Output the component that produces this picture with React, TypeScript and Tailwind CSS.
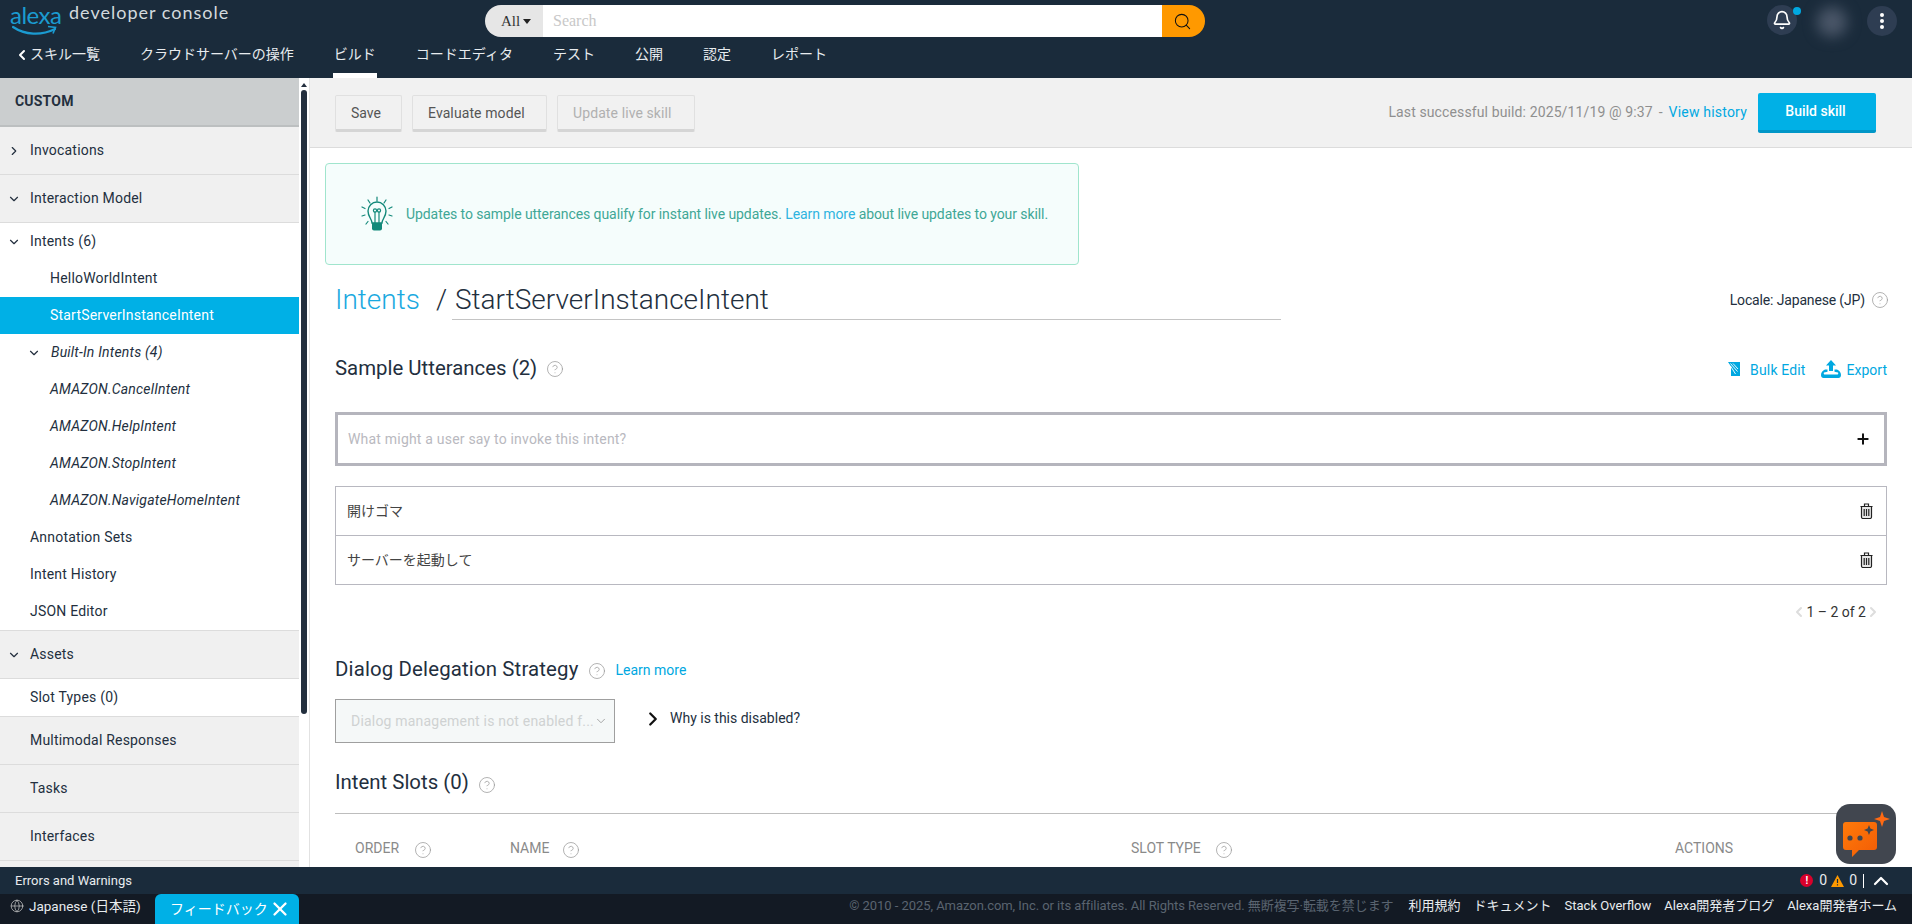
import React from "react";
import { ChevronRight, ChevronDown, ChevronLeft, ChevronUp, CircleHelp, Plus, Search, Bell, Globe, X } from "lucide-react";

const font = "font-[family-name:Roboto,'Noto_Sans_CJK_JP',sans-serif]";

function Help({ className = "" }: { className?: string }) {
  return (
    <span className={`w-[15px] h-[15px] flex items-center justify-center shrink-0 ${className}`}>
      <CircleHelp size={18} strokeWidth={1} className="text-[#9a9a9a] shrink-0" />
    </span>
  );
}

function Trash() {
  return (
    <svg width="13" height="16" viewBox="0 0 13 16" fill="none" stroke="#222" strokeWidth="1.2">
      <path d="M0.5 3.500h12M4.500 3V1h4v2" />
      <path d="M1.500 3.500h10V14a1.500 1.500 0 0 1-1.500 1.500H3A1.500 1.500 0 0 1 1.500 14z" fill="#e8e8e8" />
      <path d="M4.200 6v7M6.500 6v7M8.800 6v7" />
    </svg>
  );
}

function NavItem({ label, active }: { label: string; active?: boolean }) {
  return (
    <div className="relative h-full flex items-center">
      <span className="text-[14px] text-[#e8ecef] leading-none pb-[14px]">{label}</span>
      {active && <div className="absolute -left-[1px] -right-[1px] bottom-0 h-[5px] bg-white" />}
    </div>
  );
}

function GrayRow({ label, icon, pl = "pl-[30px]" }: { label: string; icon?: "right" | "down"; pl?: string }) {
  return (
    <div className={`h-[48px] bg-[#f0f0f0] border-b border-[#dcdcdc] flex items-center text-[14px] text-[#232f3e] ${pl} relative shrink-0`}>
      {icon === "right" && <ChevronRight size={14} strokeWidth={2} className="absolute left-[7px] text-[#232f3e]" />}
      {icon === "down" && <ChevronDown size={14} strokeWidth={2} className="absolute left-[7px] text-[#232f3e]" />}
      {label}
    </div>
  );
}

function TreeRow({ label, italic, pl, selected }: { label: string; italic?: boolean; pl: string; selected?: boolean }) {
  return (
    <div
      className={`h-[37px] flex items-center text-[14px] shrink-0 ${pl} ${italic ? "italic" : ""} ${
        selected ? "bg-[#00b0e6] text-white" : "bg-white text-[#232f3e]"
      }`}
    >
      {label}
    </div>
  );
}

function Sidebar() {
  return (
    <div className="w-[310px] shrink-0 flex border-r border-[#e2e2e2] h-full overflow-hidden tracking-[0.2px]">
      <div className="w-[299px] flex flex-col shrink-0">
        <div className="h-[49px] bg-[#cbcecf] border-b-[2px] border-[#bcbfc0] flex items-center pl-[15px] text-[14px] font-bold text-[#232f3e] shrink-0">
          CUSTOM
        </div>
        <GrayRow label="Invocations" icon="right" />
        <GrayRow label="Interaction Model" icon="down" />
        <div className="relative h-[37px] bg-white flex items-center pl-[30px] text-[14px] text-[#232f3e] shrink-0">
          <ChevronDown size={14} strokeWidth={2} className="absolute left-[7px]" />
          Intents (6)
        </div>
        <TreeRow label="HelloWorldIntent" pl="pl-[50px]" />
        <TreeRow label="StartServerInstanceIntent" pl="pl-[50px]" selected />
        <div className="relative h-[37px] bg-white flex items-center pl-[51px] text-[14px] italic text-[#232f3e] shrink-0">
          <ChevronDown size={14} strokeWidth={2} className="absolute left-[27px]" />
          Built-In Intents (4)
        </div>
        <TreeRow label="AMAZON.CancelIntent" pl="pl-[50px]" italic />
        <TreeRow label="AMAZON.HelpIntent" pl="pl-[50px]" italic />
        <TreeRow label="AMAZON.StopIntent" pl="pl-[50px]" italic />
        <TreeRow label="AMAZON.NavigateHomeIntent" pl="pl-[50px]" italic />
        <TreeRow label="Annotation Sets" pl="pl-[30px]" />
        <TreeRow label="Intent History" pl="pl-[30px]" />
        <TreeRow label="JSON Editor" pl="pl-[30px]" />
        <div className="h-[1px] bg-[#dcdcdc] shrink-0" />
        <GrayRow label="Assets" icon="down" />
        <div className="h-[38px] bg-white border-b border-[#dcdcdc] flex items-center pl-[30px] text-[14px] text-[#232f3e] shrink-0">
          Slot Types (0)
        </div>
        <GrayRow label="Multimodal Responses" />
        <GrayRow label="Tasks" />
        <GrayRow label="Interfaces" />
        <div className="flex-1 bg-[#f0f0f0]" />
      </div>
      <div className="w-[10px] bg-white flex flex-col items-center pt-[5px] shrink-0">
        <div className="w-0 h-0 border-x-[3px] border-x-transparent border-b-[4px] border-b-[#232f3e] mb-[3px]" />
        <div className="w-[6px] h-[624px] rounded-[3px] bg-[#232f3e]" />
      </div>
    </div>
  );
}

function Toolbar() {
  const btn = "h-[37px] px-[15px] pt-[2px] mt-[2px] flex items-center rounded-[2px] border border-[#e0e0e0] border-b-[3px] border-b-[#d5d5d5] text-[14px]";
  return (
    <div className="h-[70px] bg-[#f1f1f1] border-b border-[#dcdcdc] flex items-center pl-[25px] pr-[36px] shrink-0">
      <div className={`${btn} w-[67px] text-[#555]`}>Save</div>
      <div className={`${btn} w-[135px] text-[#555] ml-[10px] tracking-[0.1px]`}>Evaluate model</div>
      <div className={`${btn} w-[138px] text-[#b0b0b0] ml-[10px] tracking-[0.1px]`}>Update live skill</div>
      <div className="flex-1" />
      <span className="text-[14px] text-[#8f8f8f] tracking-[0.12px]">Last successful build: 2025/11/19 @ 9:37</span>
      <span className="text-[14px] text-[#8f8f8f] ml-[6px]">-</span>
      <span className="text-[14px] text-[#00a8e1] ml-[6px] tracking-[0.2px]">View history</span>
      <div className="ml-[11px] w-[118px] h-[40px] bg-[#00b0e6] border-b-[3px] border-[#0096c7] rounded-[2px] flex items-center justify-center text-white text-[14px] font-medium pr-[3px]">
        Build skill
      </div>
    </div>
  );
}

function Bulb() {
  return (
    <svg width="32" height="36" viewBox="0 0 32 36" fill="none" stroke="#13897a" strokeWidth="1.2" strokeLinecap="round">
      <path d="M16 1v4M7 4l2 3M25 4l-2 3M1 11l3 1.500M31 11l-3 1.500M1 20l3-1M31 20l-3-1M5 28l2-2.500M27 28l-2-2.500" />
      <path d="M11 27c0-4-4-6-4-12a9 9 0 0 1 18 0c0 6-4 8-4 12z" strokeWidth="1.4" />
      <path d="M14 27v-11M18 27v-11" />
      <circle cx="14" cy="14.500" r="1.600" />
      <circle cx="18" cy="14.500" r="1.600" />
      <path d="M11 27h10v5.500a2 2 0 0 1-2 2h-6a2 2 0 0 1-2-2z" fill="#13897a" stroke="none" />
    </svg>
  );
}

function BulkIcon() {
  return (
    <svg width="12" height="14" viewBox="0 0 12 14" fill="#00a8e1">
      <path d="M0 0h12v14H3V4.500z" />
      <path d="M2.500 1.500l7 8M5 1.500l5 5.500M2.500 4l5 8" stroke="#fff" strokeWidth="0.9" fill="none" />
    </svg>
  );
}

function ExportIcon() {
  return (
    <svg width="20" height="18" viewBox="0 0 20 18" fill="#00a8e1">
      <path d="M10 0l5 5.500h-3V11H8V5.500H5z" />
      <path d="M4 9.500h2.500v2.200L3 12.500c-.5.2-.3 2 .4 2h13.200c.7 0 .9-1.800.4-2l-3.500-.8V9.500H16c2.500 1 4 3.200 4 5.500 0 1.700-1 3-2.600 3H2.600C1 18 0 16.700 0 15c0-2.300 1.500-4.500 4-5.500z" />
    </svg>
  );
}

function MainContent() {
  return (
    <div className="flex-1 min-w-0 h-full bg-white overflow-hidden flex flex-col">
      <Toolbar />
      <div className="pl-[25px] pr-[25px]">
        <div className="ml-[-10px] mt-[15px] w-[754px] h-[102px] bg-[#f5fdfc] border border-[#a0e5cd] rounded-[4px] flex items-center pl-[35px] text-[14px] text-[#3fa796] tracking-[-0.08px]">
          <Bulb />
          <span className="ml-[13px]">
            Updates to sample utterances qualify for instant live updates. <span className="text-[#2eb4e0]">Learn more</span> about live updates to your skill.
          </span>
        </div>
        <div className="mt-[16px] flex items-start h-[39px]">
          <span className="text-[28px] leading-[38px] font-light text-[#1aa9e0] w-[101px]">Intents</span>
          <span className="text-[28px] leading-[38px] font-light text-[#232f3e] w-[16px]">/</span>
          <div className="w-[829px] h-[39px] border-b border-[#c4c4c4] pl-[3px] text-[28px] leading-[38px] font-light text-[#232f3e]">
            StartServerInstanceIntent
          </div>
          <div className="flex-1" />
          <span className="text-[14px] text-[#232f3e] leading-[38px] tracking-[-0.15px]">Locale: Japanese (JP)</span>
          <Help className="ml-[7px] mt-[11px]" />
        </div>
        <div className="mt-[34px] flex items-center h-[28px]">
          <span className="text-[20.4px] text-[#232f3e]">Sample Utterances (2)</span>
          <Help className="ml-[10px] mt-[2px]" />
          <div className="flex-1" />
          <div className="mt-[2px]"><BulkIcon /></div>
          <span className="text-[14px] text-[#00a8e1] ml-[10px] mt-[4px] tracking-[0.15px]">Bulk Edit</span>
          <div className="ml-[15px] mt-[2px]"><ExportIcon /></div>
          <span className="text-[14px] text-[#00a8e1] ml-[6px] mt-[5px]">Export</span>
        </div>
        <div className="mt-[30px] h-[54px] border-[3px] border-[#b5b5bd] flex items-center pl-[10px] pr-[13px] text-[14px] text-[#b9b9c0] tracking-[0.2px]">
          What might a user say to invoke this intent?
          <div className="flex-1" />
          <Plus size={16} strokeWidth={3} className="text-[#111]" />
        </div>
        <div className="mt-[20px] border border-[#b8b8c0] text-[14px] text-[#444]">
          <div className="h-[49px] flex items-center pl-[11px] pr-[13px] border-b border-[#b8b8c0]">
            開けゴマ<div className="flex-1" /><Trash />
          </div>
          <div className="h-[48px] flex items-center pl-[11px] pr-[13px]">
            サーバーを起動して<div className="flex-1" /><Trash />
          </div>
        </div>
        <div className="mt-[16px] h-[22px] flex items-center justify-end pr-[6px] text-[14px] text-[#333]">
          <ChevronLeft size={16} strokeWidth={3} className="text-[#ddd] -mr-[1px]" />
          <span>1 – 2 of 2</span>
          <ChevronRight size={16} strokeWidth={3} className="text-[#ddd] -ml-[1px]" />
        </div>
        <div className="mt-[32px] flex items-center h-[28px]">
          <span className="text-[20.4px] text-[#232f3e] tracking-[0.15px]">Dialog Delegation Strategy</span>
          <Help className="ml-[11px] mt-[4px]" />
          <span className="text-[14px] text-[#00a8e1] ml-[11px] mt-[3px]">Learn more</span>
        </div>
        <div className="mt-[16px] flex items-center">
          <div className="w-[280px] h-[44px] bg-[#f5f8f8] border border-[#9f9f9f] flex items-center pl-[15px] pr-[8px] text-[14px] text-[#cfd2d2] tracking-[0.2px]">
            <span className="flex-1 whitespace-nowrap">Dialog management is not enabled f...</span>
            <ChevronDown size={14} strokeWidth={1.5} className="text-[#9a9a9a] shrink-0" />
          </div>
          <ChevronRight size={22} strokeWidth={2.5} className="text-[#111] ml-[27px] -mt-[5px]" />
          <span className="text-[14px] text-[#232f3e] ml-[6px] -mt-[5px]">Why is this disabled?</span>
        </div>
        <div className="mt-[24px] flex items-center h-[30px]">
          <span className="text-[20.4px] text-[#232f3e]">Intent Slots (0)</span>
          <Help className="ml-[11px] mt-[5px]" />
        </div>
        <div className="mt-[16px] border-t border-[#bdbdbd] h-[70px] flex items-center text-[14px] text-[#8a8a8a]">
          <span className="ml-[20px] w-[46px]">ORDER</span>
          <Help className="ml-[14px] mt-[2px]" />
          <span className="ml-[80px] w-[39px]">NAME</span>
          <Help className="ml-[14px] mt-[2px]" />
          <span className="ml-[553px] w-[70px]">SLOT TYPE</span>
          <Help className="ml-[15px] mt-[2px]" />
          <span className="ml-[444px]">ACTIONS</span>
        </div>
      </div>
    </div>
  );
}

function Floating() {
  return (
    <div className="absolute left-[1836px] top-[804px] w-[60px] h-[60px] rounded-[14px] bg-[#41464f] z-10">
      <svg width="60" height="60" viewBox="0 0 60 60">
        <defs>
          <linearGradient id="o" x1="0" y1="0" x2="1" y2="1">
            <stop offset="0" stopColor="#ff7a0a" />
            <stop offset="1" stopColor="#f25c05" />
          </linearGradient>
        </defs>
        <path d="M10 18h28a3 3 0 0 1 3 3v22a3 3 0 0 1-3 3H23l-7 7v-7h-6a3 3 0 0 1-3-3V21a3 3 0 0 1 3-3z" fill="url(#o)" />
        <circle cx="14" cy="34" r="2.600" fill="#41464f" />
        <circle cx="24" cy="34" r="2.600" fill="#41464f" />
        <path d="M33 21l1.400 3.600L38 26l-3.600 1.400L33 31l-1.400-3.600L28 26l3.600-1.400z" fill="#41464f" />
        <path d="M46 7l2 6 6 2-6 2-2 6-2-6-6-2 6-2z" fill="#ff6a13" />
      </svg>
    </div>
  );
}

export default function App() {
  return (
    <div className={`relative w-[1912px] h-[924px] overflow-hidden flex flex-col bg-white ${font}`}>
      <header className="h-[78px] bg-[#1a2b3b] flex flex-col shrink-0">
        <div className="h-[43px] relative flex items-start shrink-0">
          <div className="w-[60px] ml-[10px] mt-[1px] relative h-[36px]">
            <span className="absolute left-0 top-[-1px] text-[24px] leading-[30px] text-[#1b9bd1] font-[family-name:Lato,sans-serif] tracking-[-0.5px]">alexa</span>
            <svg width="46" height="12" viewBox="0 0 46 12" fill="none" className="absolute left-[2px] top-[24px]">
              <path d="M1 2c12 8 28 9 42 2" stroke="#1b9bd1" strokeWidth="2.200" strokeLinecap="round" />
              <path d="M36 1.500l7.500 1-2.500 6" stroke="#1b9bd1" strokeWidth="1.600" fill="none" />
            </svg>
          </div>
          <span className="ml-[-1px] mt-[-1px] text-[18px] leading-[26px] tracking-[1px] text-[#d3dade] font-[family-name:Lato,sans-serif]">developer console</span>
          <div className="absolute left-[485px] top-[5px] w-[720px] h-[32px] flex rounded-full overflow-hidden font-[family-name:'Liberation_Serif',serif]">
            <div className="w-[58px] bg-[#e6e6e6] text-[#333] text-[15px] flex items-center pl-[16px]">
              All<span className="ml-[3px] w-0 h-0 border-x-[4px] border-x-transparent border-t-[5px] border-t-[#222]" />
            </div>
            <div className="flex-1 bg-white text-[#c8c8c8] text-[16px] flex items-center pl-[10px]">Search</div>
            <div className="w-[43px] bg-[#ff9900] flex items-center justify-center pr-[2px]">
              <Search size={19} strokeWidth={1.3} className="text-[#111]" />
            </div>
          </div>
          <div className="absolute left-[1767px] top-[5px] w-[30px] h-[30px] rounded-full bg-[#2e3d52] flex items-center justify-center">
            <Bell size={20} strokeWidth={2} className="text-white" />
            <span className="absolute right-[-4px] top-[2px] w-[8px] h-[8px] rounded-full bg-[#00a8e1]" />
          </div>
          <div className="absolute left-[1817px] top-[7px] w-[30px] h-[30px] rounded-full bg-[#4a5668] blur-[7px]" />
          <div className="absolute left-[1867px] top-[6px] w-[30px] h-[30px] rounded-full bg-[#2e3d52] flex flex-col items-center justify-center gap-[2px]">
            <span className="w-[4px] h-[4px] rounded-full bg-white" />
            <span className="w-[4px] h-[4px] rounded-full bg-white" />
            <span className="w-[4px] h-[4px] rounded-full bg-white" />
          </div>
        </div>
        <nav className="flex-1 flex items-stretch pl-[14px] gap-[40px]">
          <div className="flex items-center">
            <ChevronLeft size={16} strokeWidth={3} className="text-white mb-[12px]" />
            <span className="text-[14px] text-[#e8ecef] leading-none pb-[14px]">スキル一覧</span>
          </div>
          <NavItem label="クラウドサーバーの操作" />
          <NavItem label="ビルド" active />
          <NavItem label="コードエディタ" />
          <NavItem label="テスト" />
          <NavItem label="公開" />
          <NavItem label="認定" />
          <NavItem label="レポート" />
        </nav>
      </header>
      <div className="flex-1 min-h-0 flex">
        <Sidebar />
        <MainContent />
      </div>
      <div className="h-[27px] bg-[#1a2b3b] flex items-center pl-[15px] pr-[19px] shrink-0 text-[13px] text-[#e8ecef]">
        Errors and Warnings
        <div className="flex-1" />
        <span className="w-[13px] h-[13px] rounded-full bg-[#d9002b] text-white text-[10px] font-bold flex items-center justify-center">!</span>
        <span className="ml-[6px] text-[14px]">0</span>
        <svg width="13" height="12" viewBox="0 0 13 12" className="ml-[4px]"><path d="M6.500 0L13 12H0z" fill="#ff9900" /><path d="M6.500 4v4M6.500 9.200v1.200" stroke="#1a2b3b" strokeWidth="1.200" /></svg>
        <span className="ml-[5px] text-[14px]">0</span>
        <span className="ml-[6px] w-[1px] h-[14px] bg-white" />
        <ChevronUp size={24} strokeWidth={2.2} className="ml-[5px] text-white" />
      </div>
      <footer className="h-[30px] bg-[#131a24] flex pr-[15px] shrink-0">
        <div className="flex items-center pl-[10px] w-[155px] pb-[6px] text-[13.5px] text-[#e8ecef] whitespace-nowrap">
          <Globe size={14} strokeWidth={1.2} className="text-[#ccc] mr-[5px] shrink-0" />
          Japanese (日本語)
        </div>
        <div className="w-[144px] h-[30px] bg-[#00b0e6] rounded-t-[6px] flex items-center pl-[15px] text-white text-[14px]">
          フィードバック
          <X size={22} strokeWidth={2.5} className="ml-[1px]" />
        </div>
        <div className="flex-1" />
        <div className="flex items-start pt-[2px] text-[13px] leading-[20px] text-[#5a6470] tracking-[-0.05px]">
          © 2010 - 2025, Amazon.com, Inc. or its affiliates. All Rights Reserved. 無断複写·転載を禁じます
        </div>
        <div className="flex items-start pt-[2px] gap-[13px] ml-[15px] text-[13px] leading-[20px] text-[#e8ecef]">
          <span>利用規約</span>
          <span>ドキュメント</span>
          <span>Stack Overflow</span>
          <span>Alexa開発者ブログ</span>
          <span>Alexa開発者ホーム</span>
        </div>
      </footer>
      <Floating />
    </div>
  );
}
